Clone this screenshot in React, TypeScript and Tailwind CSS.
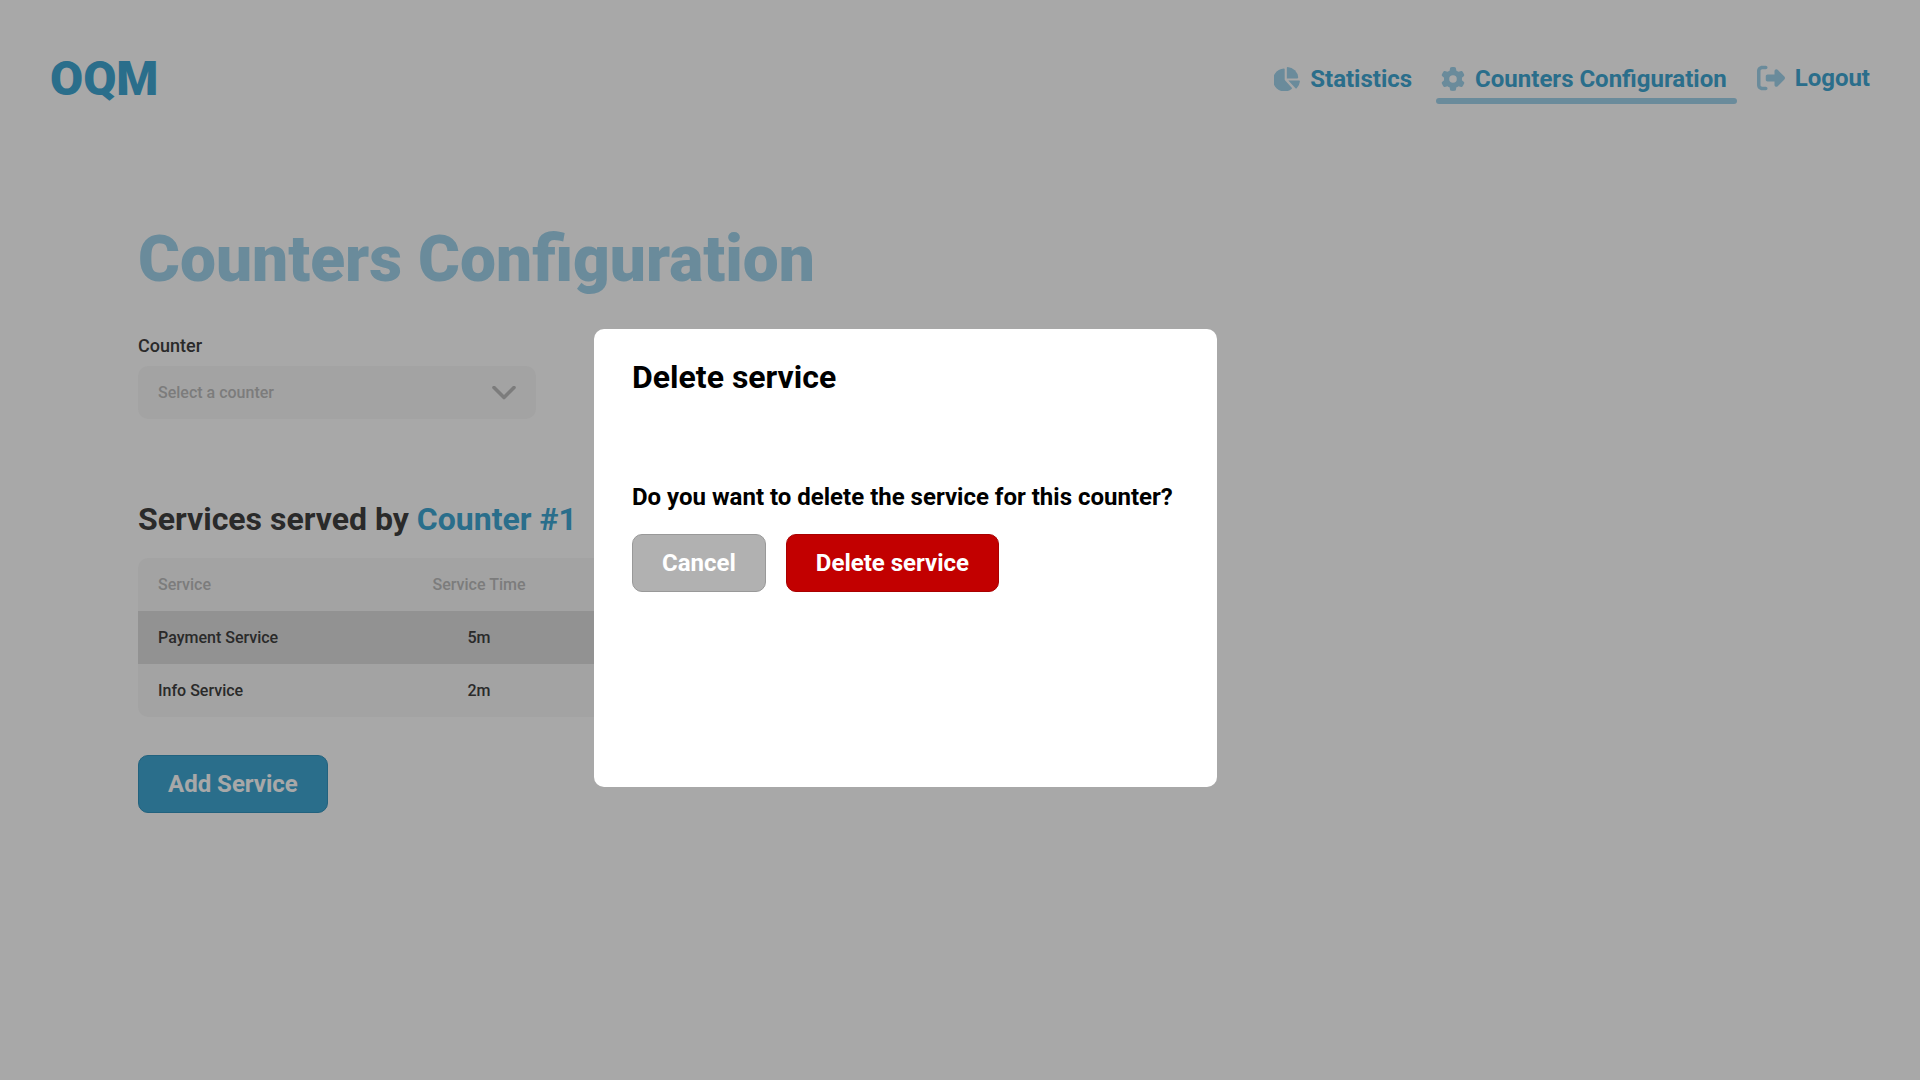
import React from "react";
import { FaGear, FaRightFromBracket } from "react-icons/fa6";

const services = [
  { name: "Payment Service", time: "5m", selected: true },
  { name: "Info Service", time: "2m", selected: false },
];

function PieIcon() {
  return (
    <svg viewBox="0 0 26 24" className="h-6 w-[26px] text-[#a2d4ec]" fill="currentColor" aria-hidden="true">
      <path d="M10.700 2.200V12.200Q10.700 13 11.200 13.500L17.800 20.700Q18.400 21.400 17.600 22A11.500 11.500 0 1 1 9.900 1.500Q10.700 1.400 10.700 2.200Z" />
      <path d="M12.800 .9Q12.800 .1 13.600 .1A11.300 11.300 0 0 1 24.200 10.600Q24.200 11.400 23.400 11.400H12.800Z" />
      <path d="M14.300 13.600H25.200Q26 13.600 25.900 14.400A11.500 11.500 0 0 1 22.700 21.200Q22.100 21.800 21.500 21.200Z" />
    </svg>
  );
}

function Header() {
  const link = "flex items-center gap-2.5 text-2xl font-bold leading-7 text-[#41a7d3]";
  const icon = "text-[#a2d4ec]";
  return (
    <header className="flex items-start justify-between px-[50px] pt-[51px]">
      <a href="#home" className="text-5xl font-black leading-14 text-[#41a7d3]">OQM</a>
      <nav className="flex items-start pt-[13px]">
        <a href="#statistics" className={`${link} mt-px mr-6`}>
          <PieIcon />
          Statistics
        </a>
        <a href="#counters" aria-current="page" className="mt-px mr-5 flex flex-col">
          <span className={`${link} pl-[5px] pr-2.5`}>
            <FaGear className={`${icon} size-6`} />
            Counters Configuration
          </span>
          <span className="mt-[5px] h-1.5 rounded-sm bg-[#a2d4ec]" />
        </a>
        <a href="#logout" className={link}>
          <FaRightFromBracket className={`${icon} size-7`} />
          Logout
        </a>
      </nav>
    </header>
  );
}

function CounterSelect() {
  return (
    <div className="mt-[34px] w-[398px]">
      <label htmlFor="counter" className="block text-lg font-medium leading-6 text-[#404040]">Counter</label>
      <div className="relative mt-2">
        <select
          id="counter"
          defaultValue=""
          className="h-[53px] w-full appearance-none rounded-[10px] bg-[#f8f8f8] px-5 text-base font-medium text-[#bdbdbd]"
        >
          <option value="">Select a counter</option>
          <option value="1">Counter #1</option>
        </select>
        <svg viewBox="0 0 24 14" className="pointer-events-none absolute right-5 top-5 h-3.5 w-6" fill="none" aria-hidden="true">
          <path d="M2 1.500L12 11.500L22 1.500" stroke="#bdbdbd" strokeWidth="3.600" strokeLinecap="round" strokeLinejoin="round" />
        </svg>
      </div>
    </div>
  );
}

function ServicesTable() {
  return (
    <div className="mt-[19px] w-[680px] overflow-hidden rounded-[10px] bg-[#f8f8f8]">
      <table className="w-full table-fixed text-base font-medium text-[#404040]">
        <thead>
          <tr className="h-[53px] text-[#bdbdbd]">
            <th scope="col" className="px-5 text-left font-medium">Service</th>
            <th scope="col" className="w-[156px] font-medium">Service Time</th>
            <th scope="col" className="w-[261px]" />
          </tr>
        </thead>
        <tbody>
          {services.map((s) => (
            <tr key={s.name} className={s.selected ? "h-[53px] bg-[#dedede]" : "h-[53px]"}>
              <td className="px-5">{s.name}</td>
              <td className="text-center">{s.time}</td>
              <td />
            </tr>
          ))}
        </tbody>
      </table>
    </div>
  );
}

function DeleteDialog() {
  const button = "h-[58px] rounded-[10px] border px-[29px] text-2xl font-bold text-white";
  return (
    <div className="fixed inset-0 flex items-center justify-center bg-black/34 pr-[109px] pt-9">
      <div
        role="dialog"
        aria-modal="true"
        aria-labelledby="dialog-title"
        className="w-[623px] rounded-[10px] bg-white px-[38px] pb-[195px] pt-7 text-black"
      >
        <h2 id="dialog-title" className="text-[32px] font-bold leading-10">Delete service</h2>
        <p className="mt-[82px] whitespace-nowrap text-2xl font-bold leading-9">Do you want to delete the service for this counter?</p>
        <div className="mt-[19px] flex gap-5">
          <button type="button" className={`${button} border-[#999999] bg-[#b1b1b1]`}>Cancel</button>
          <button type="button" className={`${button} border-[#a90000] bg-[#c20000]`}>Delete service</button>
        </div>
      </div>
    </div>
  );
}

export default function App() {
  return (
    <div className="min-h-screen bg-white font-[Roboto,sans-serif]">
      <Header />
      <main className="px-[138px] pt-[113px]">
        <h1 className="text-[64px] font-black leading-20 text-[#a2d4ec]">Counters Configuration</h1>
        <CounterSelect />
        <h2 className="mt-20 text-[32px] font-bold leading-10 text-[#404040]">
          Services served by <span className="text-[#41a7d3]">Counter #1</span>
        </h2>
        <ServicesTable />
        <button type="button" className="mt-[38px] h-[58px] rounded-[10px] border border-[#3595bf] bg-[#41a7d3] px-[29px] text-2xl font-bold text-white">
          Add Service
        </button>
      </main>
      <DeleteDialog />
    </div>
  );
}
